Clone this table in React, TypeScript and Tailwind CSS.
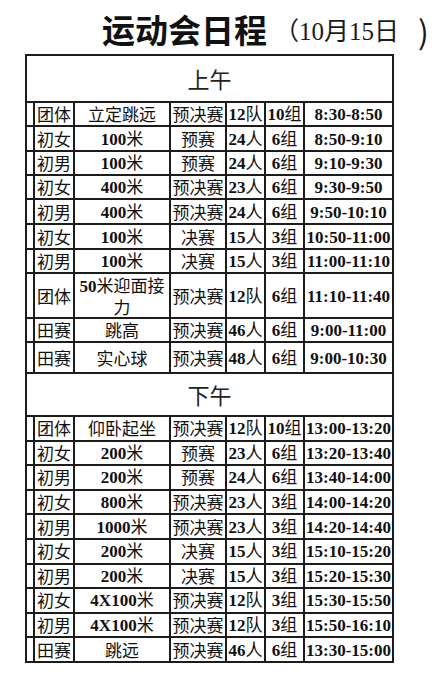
import React from 'react';

type Row = { cat: string; event: string; round: string; count: string; groups: string; time: string; h: string };

const morning: Row[] = [
  { cat: '团体', event: '立定跳远', round: '预决赛', count: '12队', groups: '10组', time: '8:30-8:50', h: 'h-[22px]' },
  { cat: '初女', event: '100米', round: '预赛', count: '24人', groups: '6组', time: '8:50-9:10', h: 'h-[23px]' },
  { cat: '初男', event: '100米', round: '预赛', count: '24人', groups: '6组', time: '9:10-9:30', h: 'h-[22px]' },
  { cat: '初女', event: '400米', round: '预决赛', count: '23人', groups: '6组', time: '9:30-9:50', h: 'h-[22px]' },
  { cat: '初男', event: '400米', round: '预决赛', count: '24人', groups: '6组', time: '9:50-10:10', h: 'h-[23px]' },
  { cat: '初女', event: '100米', round: '决赛', count: '15人', groups: '3组', time: '10:50-11:00', h: 'h-[23px]' },
  { cat: '初男', event: '100米', round: '决赛', count: '15人', groups: '3组', time: '11:00-11:10', h: 'h-[22px]' },
  { cat: '团体', event: '50米迎面接\n力', round: '预决赛', count: '12队', groups: '6组', time: '11:10-11:40', h: 'h-[43px]' },
  { cat: '田赛', event: '跳高', round: '预决赛', count: '46人', groups: '6组', time: '9:00-11:00', h: 'h-[22px]' },
  { cat: '田赛', event: '实心球', round: '预决赛', count: '48人', groups: '6组', time: '9:00-10:30', h: 'h-[29px]' },
];

const afternoon: Row[] = [
  { cat: '团体', event: '仰卧起坐', round: '预决赛', count: '12队', groups: '10组', time: '13:00-13:20', h: 'h-[22.6px]' },
  { cat: '初女', event: '200米', round: '预赛', count: '23人', groups: '6组', time: '13:20-13:40', h: 'h-[22.6px]' },
  { cat: '初男', event: '200米', round: '预赛', count: '24人', groups: '6组', time: '13:40-14:00', h: 'h-[22.6px]' },
  { cat: '初女', event: '800米', round: '预决赛', count: '23人', groups: '3组', time: '14:00-14:20', h: 'h-[22.6px]' },
  { cat: '初男', event: '1000米', round: '预决赛', count: '23人', groups: '3组', time: '14:20-14:40', h: 'h-[22.6px]' },
  { cat: '初女', event: '200米', round: '决赛', count: '15人', groups: '3组', time: '15:10-15:20', h: 'h-[22.6px]' },
  { cat: '初男', event: '200米', round: '决赛', count: '15人', groups: '3组', time: '15:20-15:30', h: 'h-[22.6px]' },
  { cat: '初女', event: '4X100米', round: '预决赛', count: '12队', groups: '3组', time: '15:30-15:50', h: 'h-[22.6px]' },
  { cat: '初男', event: '4X100米', round: '预决赛', count: '12队', groups: '3组', time: '15:50-16:10', h: 'h-[22.6px]' },
  { cat: '田赛', event: '跳远', round: '预决赛', count: '46人', groups: '6组', time: '13:30-15:00', h: 'h-[22.6px]' },
];

// latin runs in bold serif, CJK stays regular sans
const Mixed = ({ text }: { text: string }) => (
  <span>
    {text.split(/([\x20-\x7e]+)/).map((p, i) =>
      /^[\x20-\x7e]+$/.test(p) ? (
        <span key={i} className="font-bold font-['Liberation_Serif','Noto_Sans_CJK_SC',serif]">{p}</span>
      ) : (
        <span key={i}>{p}</span>
      )
    )}
  </span>
);

const Cell = ({ text, h }: { text: string; h: string }) => (
  <div className={`${h} bg-white flex items-center justify-center text-center whitespace-pre-line leading-[20px]`}>
    <Mixed text={text} />
  </div>
);

const Section = ({ title, rows, headH }: { title: string; rows: Row[]; headH: string }) => (
  <>
    <div className={`col-span-7 ${headH} bg-white flex items-center justify-center text-[22px] text-[#222]`}>{title}</div>
    {rows.map((r, i) => (
      <React.Fragment key={i}>
        <div className={`${r.h} bg-white`} />
        <Cell text={r.cat} h={r.h} />
        <Cell text={r.event} h={r.h} />
        <Cell text={r.round} h={r.h} />
        <Cell text={r.count} h={r.h} />
        <Cell text={r.groups} h={r.h} />
        <Cell text={r.time} h={r.h} />
      </React.Fragment>
    ))}
  </>
);

const App = () => {
  return (
    <div className="w-[440px] h-[682px] bg-white overflow-hidden font-['Noto_Sans_CJK_SC',sans-serif] text-[#111]">
      <div className="flex items-end pt-[13px] pl-[102px] leading-none whitespace-nowrap">
        <span className="text-[33px] font-bold text-[#111]">运动会日程</span>
        <span className="text-[25px] font-['Liberation_Serif','Noto_Sans_CJK_SC',serif] text-[#1a1a1a] ml-[7px] mb-[2px]">（10月15日</span>
        <span className="text-[32px] font-['Noto_Sans_CJK_SC',serif] text-[#1a1a1a] ml-[19px]">)</span>
      </div>

      <div className="mt-[8px] ml-[25px] w-[369px] grid grid-cols-[6px_38px_94px_54px_37px_37px_87px] gap-[2px] p-[2px] bg-[#1c1c1c] text-[17px]">
        <Section title="上午" rows={morning} headH="h-[45px]" />
        <Section title="下午" rows={afternoon} headH="h-[41px]" />
      </div>
    </div>
  );
};

export default App;
